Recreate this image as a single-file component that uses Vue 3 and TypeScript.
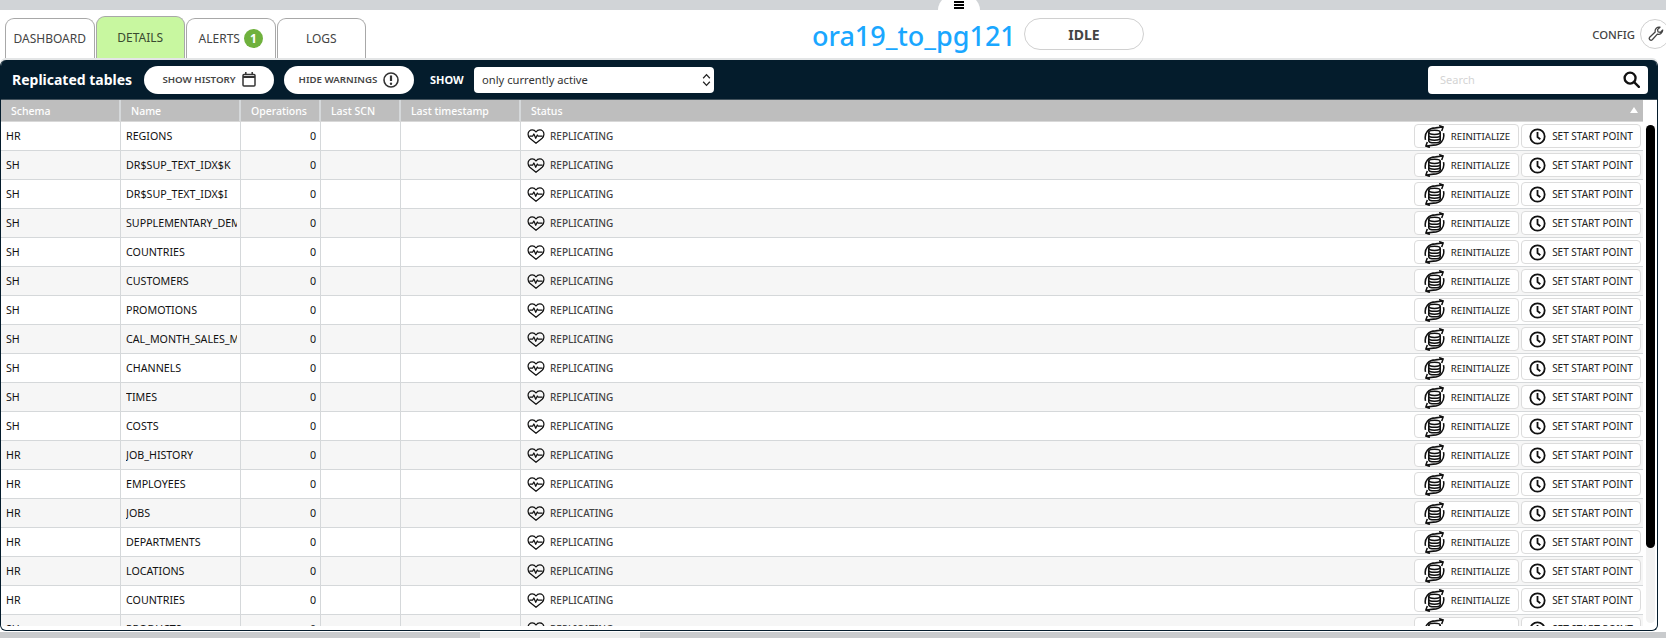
<script setup lang="ts">
// replication details view: table list with per-row actions
const tables: [string, string][] = [
  ['HR', 'REGIONS'],
  ['SH', 'DR$SUP_TEXT_IDX$K'],
  ['SH', 'DR$SUP_TEXT_IDX$I'],
  ['SH', 'SUPPLEMENTARY_DEMOGRAPHICS'],
  ['SH', 'COUNTRIES'],
  ['SH', 'CUSTOMERS'],
  ['SH', 'PROMOTIONS'],
  ['SH', 'CAL_MONTH_SALES_MV'],
  ['SH', 'CHANNELS'],
  ['SH', 'TIMES'],
  ['SH', 'COSTS'],
  ['HR', 'JOB_HISTORY'],
  ['HR', 'EMPLOYEES'],
  ['HR', 'JOBS'],
  ['HR', 'DEPARTMENTS'],
  ['HR', 'LOCATIONS'],
  ['HR', 'COUNTRIES'],
  ['SH', 'PRODUCTS']
]
const tabs = ['DASHBOARD', 'DETAILS', 'ALERTS', 'LOGS']
</script>

<template>
  <div class="page">
    <div class="topbar">
      <button class="handle" aria-label="menu"><span /><span /><span /></button>
    </div>

    <header class="header">
      <nav class="tabs">
        <div v-for="t in tabs" :key="t" class="tab" :class="{ active: t === 'DETAILS' }">
          {{ t }}
          <span v-if="t === 'ALERTS'" class="badge">1</span>
        </div>
      </nav>
      <div class="title">
        <h1>ora19_to_pg121</h1>
        <div class="state">IDLE</div>
      </div>
      <div class="config">
        CONFIG
        <span class="config-btn">
          <svg viewBox="0 0 24 24" width="16" height="16" fill="none" stroke="#444" stroke-width="1.9" stroke-linejoin="round">
            <path d="M22 6.5a6 6 0 0 1-8 5.6L6.4 20.6a2.7 2.7 0 0 1-3.9-3.7l8.300-8A6 6 0 0 1 18 1.800l-3.700 3.600.7 3.500 3.500.7 3.500-3.500z" />
          </svg>
        </span>
      </div>
    </header>

    <main class="panel">
      <div class="toolbar">
        <strong class="heading">Replicated tables</strong>
        <button class="pill pill-history">
          SHOW HISTORY
          <svg viewBox="0 0 14 15" width="14" height="15" fill="none" stroke="#333" stroke-width="1.5">
            <rect x="1" y="2.5" width="12" height="11.5" rx="1" />
            <path d="M1 5h12" stroke-width="2" />
            <path d="M3.800 0v3M10.200 0v3" />
          </svg>
        </button>
        <button class="pill pill-warn">
          HIDE WARNINGS
          <svg viewBox="0 0 16 16" width="16" height="16" fill="none" stroke="#333" stroke-width="1.6">
            <circle cx="8" cy="8" r="7" />
            <path d="M8 3.5v5.5" stroke-width="2.2" />
            <circle cx="8" cy="11.7" r="1.2" fill="#333" stroke="none" />
          </svg>
        </button>
        <span class="show-label">SHOW</span>
        <div class="select">
          only currently active
          <svg viewBox="0 0 10 16" width="9" height="14" fill="none" stroke="#222" stroke-width="1.4">
            <path d="M1.2 6 5 1.8 8.800 6M1.200 10 5 14.200 8.800 10" />
          </svg>
        </div>
        <div class="search">
          <span class="placeholder">Search</span>
          <svg viewBox="0 0 18 18" width="17" height="17" fill="none" stroke="#111" stroke-width="2.5">
            <circle cx="7.5" cy="7.5" r="5.8" />
            <path d="m11.800 11.800 5 5" stroke-linecap="round" />
          </svg>
        </div>
      </div>

      <div class="grid-head">
        <div class="h c-schema">Schema</div>
        <div class="h c-name">Name</div>
        <div class="h c-ops">Operations</div>
        <div class="h c-scn">Last SCN</div>
        <div class="h c-ts">Last timestamp</div>
        <div class="h c-status">Status<i class="sort" /></div>
      </div>

      <div class="grid-wrap">
        <div class="grid-body">
          <div v-for="(row, i) in tables" :key="i" class="row">
            <div class="c c-schema">{{ row[0] }}</div>
            <div class="c c-name"><span class="clip">{{ row[1] }}</span></div>
            <div class="c c-ops num">0</div>
            <div class="c c-scn" />
            <div class="c c-ts" />
            <div class="c c-status">
              <span class="status">
                <svg viewBox="0 0 20 17" width="18" height="15" fill="none" stroke="#111" stroke-width="1.4" stroke-linejoin="round">
                  <path d="M3 10.500C1.500 9 1 7.600 1 6 1 3.200 3.100 1 5.700 1 7.500 1 9 1.900 10 3.400 11 1.900 12.500 1 14.300 1 16.900 1 19 3.200 19 6c0 1.600-.5 3-2 4.500L10 16.200z" />
                  <path d="M2.500 8.200h3.600l1.500-2.600 2.100 5 1.800-3.800 1 1.400h5" />
                </svg>
                REPLICATING
              </span>
              <span class="actions">
                <button class="act act-reinit">
                  <svg viewBox="0 0 24 24" width="23" height="23" fill="none" stroke="#111" stroke-width="1.6">
                    <ellipse cx="12" cy="7.600" rx="6" ry="2.200" />
                    <path d="M6 7.600v8.800c0 1.200 2.700 2.200 6 2.200s6-1 6-2.200V7.600M6 10.600c0 1.200 2.700 2.200 6 2.200s6-1 6-2.200M6 13.600c0 1.200 2.700 2.200 6 2.200s6-1 6-2.200" />
                    <path d="M2.600 15.500C1 8.500 6 3 13 3l7.500-.8M16.800.6 21 2.100l-1.500 4.200M21.400 8.500C23 15.500 18 21 11 21l-7.500.8M7.200 23.400 3 21.900l1.500-4.200" />
                  </svg>
                  REINITIALIZE
                </button>
                <button class="act act-start">
                  <svg viewBox="0 0 18 18" width="17" height="17" fill="none" stroke="#111" stroke-width="1.9">
                    <circle cx="9" cy="9" r="7.6" />
                    <path d="M9 4.200v5.300l3 2.400" />
                  </svg>
                  SET START POINT
                </button>
              </span>
            </div>
          </div>
        </div>
        <div class="scroll-track"><div class="scroll-thumb" /></div>
      </div>
    </main>

    <footer class="bottom">
      <span class="bottom-light" />
    </footer>
  </div>
</template>

<style>
html,
body {
  margin: 0;
  overflow: hidden;
  background: #fff;
}
</style>

<style scoped>
.page {
  width: 1666px;
  height: 638px;
  display: flex;
  flex-direction: column;
  font-family: "Noto Sans", "Open Sans", sans-serif;
  color: #333;
  overflow: hidden;
}

.topbar {
  height: 10px;
  flex: none;
  background: #d1d4d7;
  display: flex;
  padding-left: 938px;
  overflow: hidden;
}

.handle {
  width: 42px;
  height: 17px;
  margin-top: -7px;
  border: 0;
  padding: 8px 0 0;
  background: #fff;
  border-radius: 21px 21px 0 0 / 17px 17px 0 0;
  display: flex;
  flex-direction: column;
  align-items: center;
  gap: 1px;
  flex: none;
}

.handle span {
  width: 10px;
  height: 2px;
  background: #000;
  flex: none;
}

.header {
  height: 48px;
  flex: none;
  display: flex;
  position: relative;
  justify-content: space-between;
  align-items: flex-end;
  padding: 0 0 0 5px;
}

.tabs {
  display: flex;
  gap: 1px;
  align-items: flex-end;
}

.tab {
  width: 87.5px;
  height: 39px;
  box-sizing: content-box;
  border: 1px solid #a8a8a8;
  border-bottom: 0;
  border-radius: 9px 9px 0 0;
  display: flex;
  align-items: center;
  justify-content: center;
  gap: 4px;
  font-size: 12px;
  color: #444;
  background: #fff;
}

.tab.active {
  height: 41px;
  background: #c8f7a0;
  color: #3a4a30;
}

.badge {
  width: 19px;
  height: 19px;
  border-radius: 50%;
  background: #6fb13d;
  color: #fff;
  font-size: 12px;
  font-weight: 700;
  display: flex;
  align-items: center;
  justify-content: center;
}

.title {
  position: absolute;
  left: 812px;
  top: 8px;
  display: flex;
  align-items: flex-start;
  gap: 9px;
}

.title h1 {
  margin: 0;
  width: 203px;
  font-size: 27px;
  line-height: 36px;
  font-weight: 500;
  color: #1aa7ff;
  white-space: nowrap;
}

.state {
  width: 118px;
  height: 30px;
  border: 1px solid #d0d0d0;
  border-radius: 16px;
  display: flex;
  align-items: center;
  justify-content: center;
  font-size: 14px;
  font-weight: 700;
  color: #444;
}

.config {
  align-self: flex-start;
  margin-top: 9px;
  display: flex;
  align-items: center;
  gap: 5px;
  font-size: 11.3px;
  font-weight: 500;
  color: #444;
  margin-right: -4px;
}

.config-btn {
  width: 30px;
  height: 30px;
  border: 1px solid #d0d0d0;
  border-radius: 50%;
  display: flex;
  align-items: center;
  padding-left: 7px;
  box-sizing: border-box;
}

.panel {
  height: 571px;
  width: 1658px;
  margin-top: 2px;
  flex: none;
  display: flex;
  flex-direction: column;
  box-sizing: border-box;
  border: 1px solid #041c2c;
  border-top: 0;
  border-radius: 6px;
  box-shadow: 0 -2px 0 #e3e5e6;
  overflow: hidden;
}

.toolbar {
  height: 40px;
  flex: none;
  display: flex;
  align-items: center;
  background: #041c2c;
  border-bottom: 1px solid #43525c;
  box-sizing: border-box;
  padding-left: 11px;
}

.heading {
  width: 132px;
  font-size: 14px;
  font-weight: 700;
  color: #fff;
  white-space: nowrap;
}

.pill {
  height: 28px;
  border: 0;
  border-radius: 14px;
  background: #fff;
  display: flex;
  align-items: center;
  justify-content: center;
  gap: 6px;
  font-family: inherit;
  font-size: 9.7px;
  font-weight: 600;
  color: #444;
  padding: 0;
}

.pill-history {
  width: 130px;
  margin-right: 10px;
}

.pill-warn {
  width: 130px;
  margin-right: 16px;
}

.show-label {
  width: 44px;
  font-size: 11px;
  font-weight: 700;
  color: #fff;
}

.select {
  width: 240px;
  height: 26px;
  border-radius: 4px;
  background: #fff;
  display: flex;
  align-items: center;
  justify-content: space-between;
  box-sizing: border-box;
  padding: 0 3px 0 8px;
  font-size: 11.2px;
  color: #333;
}

.search {
  margin-left: auto;
  margin-right: 9px;
  width: 220px;
  height: 28px;
  border-radius: 4px;
  background: #fff;
  display: flex;
  align-items: center;
  justify-content: space-between;
  box-sizing: border-box;
  padding: 0 8px 0 12px;
}

.placeholder {
  font-size: 11px;
  color: #d4d4d4;
}

.grid-head,
.row {
  display: flex;
  width: 1642px;
}

.grid-head {
  height: 22px;
  flex: none;
  background: #bebebe;
  border-bottom: 1px solid #d8d8d8;
  box-sizing: border-box;
}

.h {
  display: flex;
  align-items: center;
  box-sizing: border-box;
  font-size: 10.5px;
  font-weight: 500;
  color: #fff;
  padding-left: 10px;
  border-right: 2px solid #d5d8da;
  position: relative;
}

.c-schema,
.c-name {
  width: 120px;
}

.c-ops,
.c-scn {
  width: 80px;
}

.c-ts {
  width: 120px;
}

.c-status {
  flex: 1;
  border-right: 0;
}

.sort {
  position: absolute;
  right: 5px;
  top: 7px;
  border: 4px solid transparent;
  border-top: 0;
  border-bottom: 6px solid #fff;
}

.grid-wrap {
  flex: 1;
  min-height: 0;
  position: relative;
}

.grid-body {
  height: 504px;
  overflow: hidden;
}

.scroll-track {
  position: absolute;
  left: 1645px;
  top: 3px;
  width: 9px;
  height: 498px;
  border-radius: 5px;
  background: #f2f2f2;
}

.scroll-thumb {
  height: 423px;
  border-radius: 5px;
  background: #000;
}

.row {
  height: 29px;
  border-bottom: 1px solid #d5d8da;
  box-sizing: border-box;
  font-size: 10.7px;
  color: #111;
}

.row:nth-child(even) {
  background: #f6f6f6;
}

.c {
  display: flex;
  align-items: center;
  box-sizing: border-box;
  padding-left: 5px;
  border-right: 1px solid #d5d8da;
  min-width: 0;
}

.c.c-status {
  border-right: 0;
  padding-left: 6px;
  padding-right: 2px;
  justify-content: space-between;
}

.clip {
  display: block;
  overflow: hidden;
  white-space: nowrap;
  width: 111px;
}

.num {
  justify-content: flex-end;
  padding-right: 4px;
}

.status {
  display: flex;
  align-items: center;
  gap: 5px;
  color: #444;
  font-size: 10px;
  font-weight: 500;
}

.actions {
  display: flex;
  gap: 2px;
}

.act {
  height: 24px;
  border: 1px solid #dcdcdc;
  border-radius: 4px;
  background: #fff;
  display: flex;
  align-items: center;
  justify-content: center;
  gap: 5px;
  padding: 0;
  font-family: inherit;
  font-size: 9.7px;
  color: #222;
  white-space: nowrap;
}

.act-reinit {
  width: 105px;
}

.act-start {
  width: 120px;
  font-size: 10px;
  gap: 6px;
}

.bottom {
  flex: 1;
  background: #c9cbcd;
  display: flex;
  margin-top: 1px;
}

.bottom-light {
  width: 160px;
  margin-left: 480px;
  background: #eceded;
}
</style>
